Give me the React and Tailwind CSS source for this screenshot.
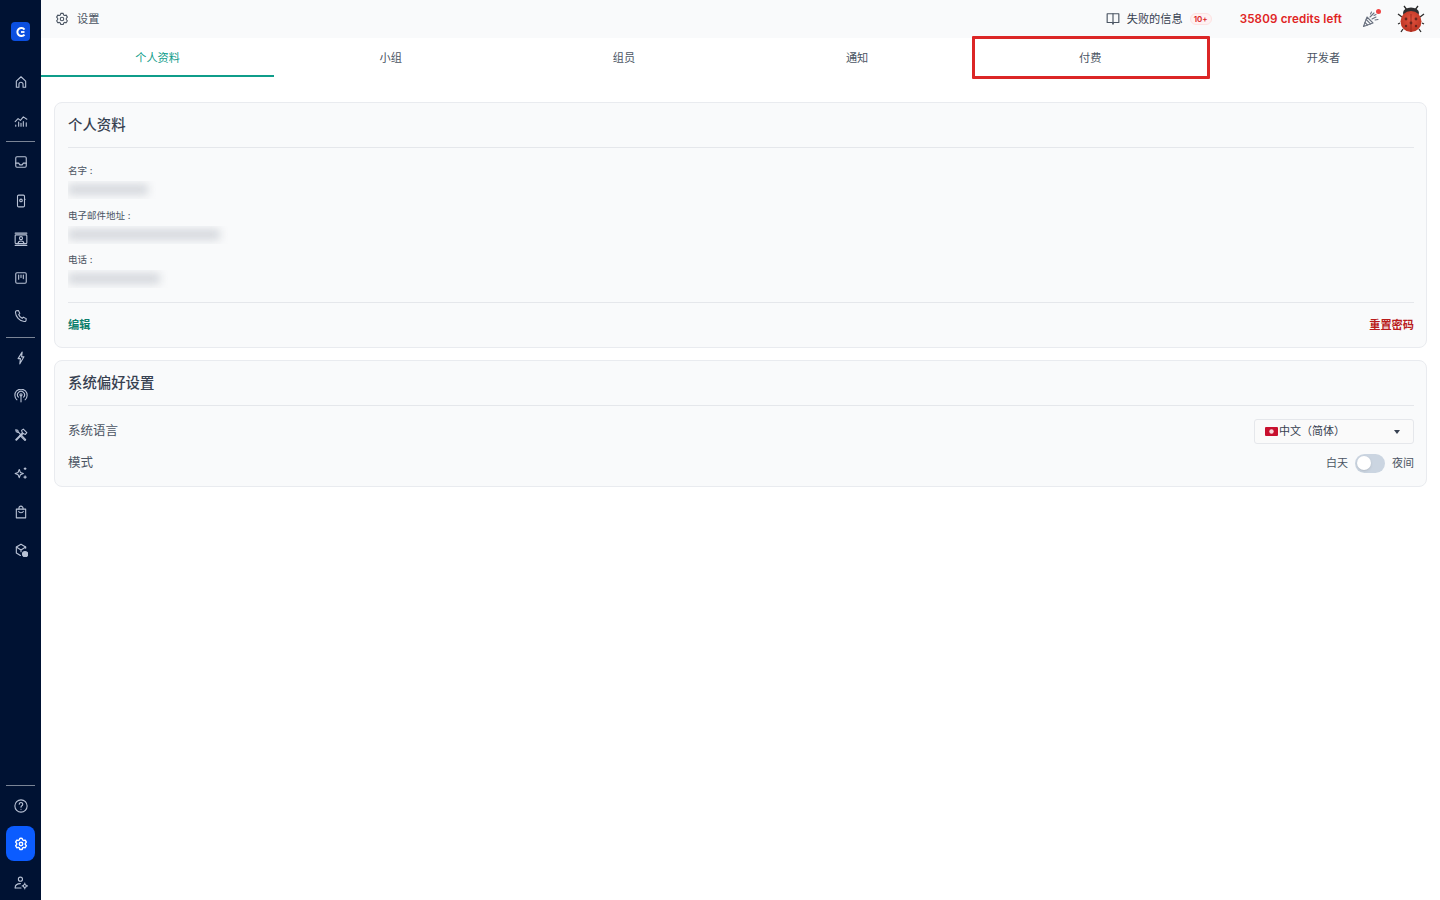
import React from "react";

const S = ({ children, size = 14, w = 1.1 }) => (
  <svg width={size} height={size} viewBox="0 0 24 24" fill="none" stroke="currentColor" strokeWidth={w * 24 / size} strokeLinecap="round" strokeLinejoin="round">{children}</svg>
);

const HomeI = () => <S><path d="M4 21V10.500L12 3l8 7.500V21h-4.500v-5a3.500 3.500 0 0 0-7 0v5z" /></S>;
const Chart = () => (
  <S><path d="M2 13l5-5 4 3 5-6 6 4" /><path d="M3 21v-2M8 21v-7M12 21v-5M16 21v-8M21 21v-6" /></S>
);
const InboxI = () => (
  <S><rect x="3" y="3" width="18" height="18" rx="2" /><path d="M3 14h5l2 3h4l2-3h5" /></S>
);
const Device = () => (
  <S><rect x="6" y="2" width="12" height="20" rx="2" /><circle cx="12" cy="11" r="2.200" /><path d="M18 9h1" /></S>
);
const Contact = () => (
  <S><path d="M2 2h20" /><rect x="2" y="5" width="20" height="15" rx="1.500" /><circle cx="12" cy="10.500" r="2.600" /><path d="M7 20c0-3 2-4.500 5-4.500s5 1.500 5 4.500" /><path d="M2 23h20" /></S>
);
const Board = () => (
  <S><rect x="3" y="3" width="18" height="18" rx="2" /><path d="M8 7v7M12 7v4M16 7v6" /></S>
);
const PhoneI = () => (
  <S><path d="M4 3l3.500-.500 2.500 5-2 2c1 3 3 5 6 6.500l2-2 5 2.500-.500 3.500c-.500 1-2 1.500-3 1.500C9 21 3 13 2.500 6c0-1 .5-2.500 1.500-3z" /></S>
);
const Bolt = () => <S><path d="M14 2L7 13h4l-1 9 7-12h-4z" /></S>;
const RadioI = () => (
  <S><path d="M12 11.500V22" /><circle cx="12" cy="10" r="1.800" /><path d="M7.500 14a6 6 0 1 1 9 0" /><path d="M5 18.500A10.500 10.500 0 1 1 19 18.500" /></S>
);
const Tools = () => (
  <S><path d="M3 20l1 1 11-11-1-1z" /><path d="M13 4l3-2 6 6-2.500 3-3-1-2.500-2.500z" /><path d="M20 20l-1 1.500-9-9 1.500-1.500z" /><path d="M3 3l3.500 1 1 3 3 3M3 3l1 3.500 3 1" /></S>
);
const Spark = () => (
  <S><path d="M9 6l2 5 5 2-5 2-2 5-2-5-5-2 5-2z" /><path d="M19 3v3M17.500 4.500h3M19 17v4M17 19h4" /></S>
);
const Bag = () => (
  <S><path d="M4 7h16v15H4z" /><path d="M8.500 7V5.500a3.500 3.500 0 0 1 7 0V7" /><path d="M8 11c1 3 7 3 8 0" /></S>
);
const Box = () => (
  <S><path d="M20 9V7l-8-5-8 5v10l7 4.500" /><path d="M4 7l8 5 8-5M12 12v3" /><circle cx="19" cy="19" r="4.500" fill="currentColor" /></S>
);
const Help = () => (
  <S><circle cx="12" cy="12" r="10.500" /><path d="M9 9a3 3 0 1 1 4.500 2.600c-1 .6-1.500 1.200-1.500 2.400" /><path d="M12 17.500v.1" /></S>
);
const Gear = ({ w = 1.1 }) => (
  <S w={w}>
    <path d="M12 2l2 .4.800 2.600 1.800 1 2.600-.6 2 3.400-1.800 2 0 2.200 1.800 2-2 3.400-2.600-.6-1.800 1-.800 2.600h-4l-.800-2.600-1.800-1-2.600.6-2-3.400 1.800-2 0-2.200-1.800-2 2-3.400 2.600.6 1.800-1 .800-2.600z" />
    <circle cx="12" cy="12" r="3" />
  </S>
);
const UserGear = () => (
  <S><circle cx="11" cy="5.500" r="3.500" /><path d="M2 20c0-4 3-7 9-7" /><path d="M2 20.500h10" /><circle cx="18.500" cy="17" r="2.500" /><path d="M18.500 12v2M18.500 20v2M14 17h2M21 17h2" /></S>
);
const Book = () => (
  <S w={1.15}><path d="M2 3h20v15h-9l-1 3-1-3H2z" /><path d="M12 3v15" /></S>
);
const Popper = () => (
  <svg width="18" height="18" viewBox="0 0 18 18" fill="none" stroke="#6b7280" strokeWidth="1.100" strokeLinecap="round" strokeLinejoin="round">
    <path d="M1.500 16.500L5 7l6 6z" />
    <path d="M3 12.500l2.500 2.500M4.200 9.500l4.300 4.300" />
    <path d="M8 7l4-4M10 9l4-2M8.500 4l1-2M13 10l3-.5M12 5.500l2-1" />
  </svg>
);
const Logo = () => (
  <span className="flex h-[19px] w-[19px] items-center justify-center rounded-[4px] bg-[#0b4fe0]">
    <svg width="12" height="12" viewBox="0 0 12 12" fill="none" stroke="#ffffff" strokeWidth="2">
      <path d="M9.500 3.500A4 4 0 1 0 9.500 8.500" />
      <path d="M6 6h3.500" strokeWidth="1.800" />
    </svg>
  </span>
);

const Item = ({ children }) => (
  <div className="flex h-[38.500px] w-full items-center justify-center text-[#b9c3d6]">{children}</div>
);
const Rule = () => <div className="my-[1px] h-px w-[29px] shrink-0 bg-[#7a8496]" />;

const Sidebar = () => (
  <aside className="flex h-[900px] w-[41px] shrink-0 flex-col items-center bg-[#001233] pt-[22px]">
    <Logo />
    <div className="mt-[22px] w-full">
      <Item><HomeI /></Item>
      <Item><Chart /></Item>
    </div>
    <Rule />
    <div className="w-full">
      <Item><InboxI /></Item>
      <Item><Device /></Item>
      <Item><Contact /></Item>
      <Item><Board /></Item>
      <Item><PhoneI /></Item>
    </div>
    <Rule />
    <div className="w-full">
      <Item><Bolt /></Item>
      <Item><RadioI /></Item>
      <Item><Tools /></Item>
      <Item><Spark /></Item>
      <Item><Bag /></Item>
      <Item><Box /></Item>
    </div>
    <div className="mt-auto flex w-full flex-col items-center">
      <Rule />
      <div className="flex h-[38px] w-full items-center justify-center text-[#b9c3d6]">
        <Help />
      </div>
      <div className="mt-[1px] flex h-[35px] w-[29px] items-center justify-center rounded-[8px] bg-[#0b5cff] text-white">
        <Gear w={1.4} />
      </div>
      <div className="flex h-[39px] w-full items-center justify-center pt-[5px] text-[#b9c3d6]">
        <UserGear />
      </div>
    </div>
  </aside>
);

const Ladybug = () => (
  <svg width="28" height="28" viewBox="0 0 28 28" fill="none">
    <defs>
      <radialGradient id="bug" cx="50%" cy="40%" r="65%">
        <stop offset="0%" stopColor="#e2543f" />
        <stop offset="100%" stopColor="#b9301f" />
      </radialGradient>
    </defs>
    <path d="M10 5L7 1M18 5l3-4M5 12L1 9M23 12l4-3M3 18l-2 1M25 18l2 1M6 24l-2 3M22 24l2 3" stroke="#2b2b2b" strokeWidth="1.300" />
    <ellipse cx="14" cy="8" rx="8" ry="5.500" fill="#2d2d2f" />
    <circle cx="14" cy="16.500" r="10.500" fill="url(#bug)" />
    <path d="M14 9v18" stroke="#8f241b" strokeWidth="0.800" />
    <circle cx="9" cy="14" r="1.400" fill="#6a241d" />
    <circle cx="19" cy="14" r="1.400" fill="#6a241d" />
    <circle cx="14" cy="18" r="1.400" fill="#6a241d" />
    <circle cx="9" cy="21" r="1.200" fill="#6a241d" />
    <circle cx="19" cy="21" r="1.200" fill="#6a241d" />
  </svg>
);

const Header = () => (
  <header className="flex h-[38px] items-center bg-[#f9fafb] pl-[14px] pr-[15px]">
    <span className="flex text-[#4b5563]"><Gear /></span>
    <span className="ml-[8px] text-[11.200px] text-[#4b5563]">设置</span>
    <div className="ml-auto flex items-center">
      <span className="flex text-[#4b5563]"><Book /></span>
      <span className="ml-[7px] text-[11.200px] text-[#374151]">失败的信息</span>
      <span className="ml-[7px] flex h-[12px] w-[22px] items-center justify-center rounded-full border border-[#fde2e2] bg-[#fef2f2] text-[8px] font-semibold text-[#dc2626]">10+</span>
      <span className="ml-[28px] pt-[1px] text-[11.600px] font-semibold tracking-[0.15px] text-[#e02424]">35809 credits left</span>
      <span className="relative ml-[20px] flex">
        <Popper />
        <span className="absolute right-[-1px] top-[-1px] h-[5px] w-[5px] rounded-full bg-[#ef4444]" />
      </span>
      <span className="ml-[17px] flex"><Ladybug /></span>
    </div>
  </header>
);

const tabs = ["个人资料", "小组", "组员", "通知", "付费", "开发者"];
const Tabs = () => (
  <nav className="relative grid h-[39px] grid-cols-6">
    {tabs.map((t, i) => (
      <div
        key={t}
        className={
          i === 0
            ? "flex items-center justify-center pt-[1px] text-[11.200px] text-[#0f9d8a] shadow-[inset_0_-2px_0_#0f9d8a]"
            : "flex items-center justify-center pt-[1px] text-[11.200px] text-[#4b5563]"
        }
      >
        {t}
      </div>
    ))}
    <div className="absolute left-[931px] top-[-2px] h-[43px] w-[238px] rounded-[1px] border-[3px] border-[#dc2626]" />
  </nav>
);

const Field = ({ label, w }) => (
  <div className="h-[44.500px]">
    <div className="h-[17px] text-[9.500px] leading-[17px] text-[#4b5563]">{label}</div>
    <div className="mt-[2px] h-[18px] w-fit overflow-hidden pr-[8px]">
      <div className={"mt-[3px] h-[11px] rounded-[2px] bg-[#d5d8dd] blur-[4px] " + w} />
    </div>
  </div>
);

const Card = ({ title, children, h }) => (
  <section className={"rounded-[8px] border border-[#e9ebef] bg-[#f9fafb] pl-[13px] pr-[12px] " + h}>
    <h2 className="flex h-[45px] items-center border-b border-[#e5e7eb] text-[14.400px] font-medium text-[#374151]">{title}</h2>
    {children}
  </section>
);

const Flag = () => (
  <svg width="13" height="9" viewBox="0 0 13 9">
    <rect width="13" height="9" rx="1" fill="#c8102e" />
    <circle cx="6.500" cy="4.500" r="2.200" fill="#f7d6da" />
  </svg>
);

const Profile = () => (
  <Card title="个人资料" h="h-[246px]">
    <div className="h-[155px] border-b border-[#e5e7eb] pt-[14px]">
      <Field label="名字 :" w="w-[80px]" />
      <Field label="电子邮件地址 :" w="w-[152px]" />
      <Field label="电话 :" w="w-[92px]" />
    </div>
    <div className="flex h-[43px] items-center justify-between pt-[1px] text-[11.200px] font-semibold">
      <span className="text-[#0f7f6d]">编辑</span>
      <span className="text-[#b91c1c]">重置密码</span>
    </div>
  </Card>
);

const Prefs = () => (
  <Card title="系统偏好设置" h="h-[127px]">
    <div className="flex h-[51px] items-center justify-between">
      <span className="text-[12.500px] text-[#4b5563]">系统语言</span>
      <div className="flex h-[25px] w-[160px] items-center rounded-[3px] border border-[#e5e7eb] bg-[#fafafa] pl-[10px] pr-[13px] text-[11px] text-[#374151]">
        <Flag />
        <span className="ml-[1px]">中文（简体）</span>
        <span className="ml-auto h-0 w-0 border-x-[3.500px] border-t-[4px] border-x-transparent border-t-[#374151]" />
      </div>
    </div>
    <div className="flex h-[12px] items-center justify-between">
      <span className="text-[12.500px] text-[#4b5563]">模式</span>
      <div className="flex items-center text-[11px] text-[#4b5563]">
        <span>白天</span>
        <span className="mx-[7px] flex h-[19px] w-[30px] items-center rounded-full bg-[#cbd5e1] pl-[2px]">
          <span className="h-[14px] w-[14px] rounded-full bg-white shadow" />
        </span>
        <span>夜间</span>
      </div>
    </div>
  </Card>
);

export default function App() {
  return (
    <div className="flex h-[900px] w-[1440px] overflow-hidden bg-white font-['Inter','Noto_Sans_CJK_SC',sans-serif]">
      <Sidebar />
      <main className="min-w-0 flex-1">
        <Header />
        <Tabs />
        <div className="flex flex-col gap-[12px] px-[13px] pt-[25px]">
          <Profile />
          <Prefs />
        </div>
      </main>
    </div>
  );
}
